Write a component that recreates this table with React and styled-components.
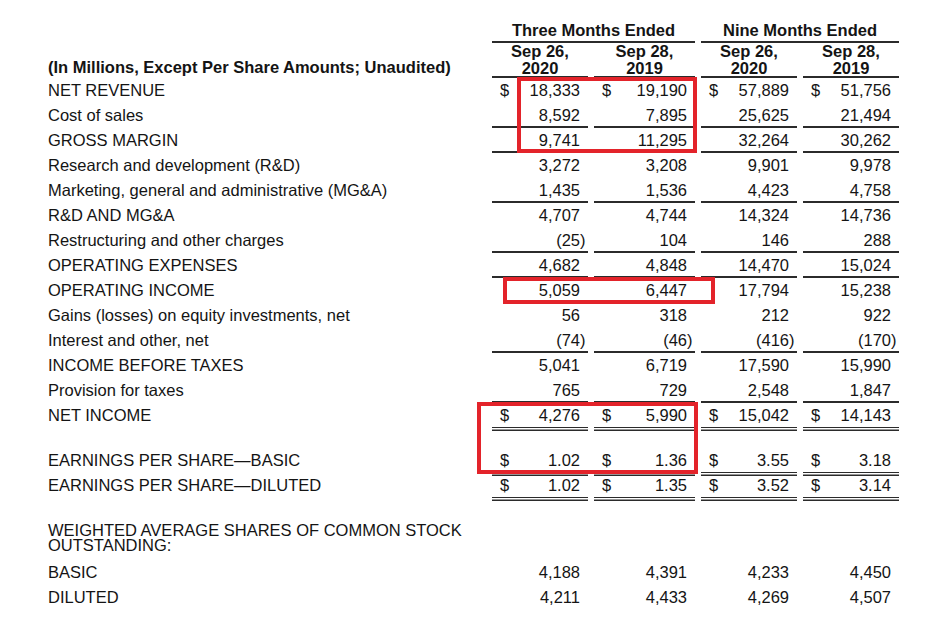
import React from 'react';
import styled, { createGlobalStyle } from 'styled-components';

const GlobalStyle = createGlobalStyle`
  html, body {
    margin: 0;
    padding: 0;
    background: #fff;
  }
  body {
    font-family: "Liberation Sans", Arial, sans-serif;
    color: #141414;
  }
`;

const COLS = '438px 96px 101px 96px 96px';
const INK = '#2b2b2b';

const Page = styled.div`
  position: relative;
  width: 944px;
  height: 617px;
  overflow: hidden;
  box-sizing: border-box;
  padding: 21px 0 0 48px;
  font-size: 16.5px;
`;

const Grid = styled.div`
  display: grid;
  grid-template-columns: ${COLS};
  column-gap: 6px;
`;

const rule = (kind) => {
  if (kind === 'single') {
    return `background: linear-gradient(${INK}, ${INK}) left bottom / 100% 2px no-repeat;`;
  }
  if (kind === 'double') {
    return `
      background: linear-gradient(${INK}, ${INK}) left bottom / 100% 1.5px no-repeat;
      box-shadow: 0 1.5px 0 #fff, 0 3px 0 ${INK};
    `;
  }
  return '';
};

const GroupHead = styled.div`
  grid-column: span 2;
  text-align: center;
  font-weight: 700;
  line-height: 18px;
  padding-bottom: 4px;
  ${rule('single')}
`;

const DateHead = styled.div`
  text-align: center;
  font-weight: 700;
  line-height: 17px;
  padding-top: 0;
  padding-bottom: 1px;
  ${rule('single')}
`;

const UnitsLabel = styled.div`
  align-self: end;
  font-weight: 700;
  line-height: 18px;
  padding-bottom: 2px;
  white-space: nowrap;
`;

const Row = styled(Grid)`
  height: 25px;
  margin-top: ${(p) => p.$gap || 0}px;
`;

const Label = styled.div`
  line-height: 25px;
  white-space: nowrap;
`;

const Value = styled.div`
  display: flex;
  justify-content: space-between;
  align-items: center;
  padding: 0 8px;
  white-space: nowrap;
  ${(p) => rule(p.$rule)}
`;

const Paren = styled.span`
  margin-right: -5.5px;
`;

const NoteLabel = styled.div`
  grid-column: 1;
  line-height: 15px;
  margin: 25px 0 7px;
`;

const Highlight = styled.div`
  position: absolute;
  box-sizing: border-box;
  border: 4px solid #e3232a;
  pointer-events: none;
`;

const rows = [
  { label: 'NET REVENUE', values: ['18,333', '19,190', '57,889', '51,756'], dollar: true },
  { label: 'Cost of sales', values: ['8,592', '7,895', '25,625', '21,494'], rule: 'single' },
  { label: 'GROSS MARGIN', values: ['9,741', '11,295', '32,264', '30,262'], rule: 'single' },
  { label: 'Research and development (R&D)', values: ['3,272', '3,208', '9,901', '9,978'] },
  { label: 'Marketing, general and administrative (MG&A)', values: ['1,435', '1,536', '4,423', '4,758'], rule: 'single' },
  { label: 'R&D AND MG&A', values: ['4,707', '4,744', '14,324', '14,736'] },
  { label: 'Restructuring and other charges', values: ['(25)', '104', '146', '288'], rule: 'single' },
  { label: 'OPERATING EXPENSES', values: ['4,682', '4,848', '14,470', '15,024'], rule: 'single' },
  { label: 'OPERATING INCOME', values: ['5,059', '6,447', '17,794', '15,238'] },
  { label: 'Gains (losses) on equity investments, net', values: ['56', '318', '212', '922'] },
  { label: 'Interest and other, net', values: ['(74)', '(46)', '(416)', '(170)'], rule: 'single' },
  { label: 'INCOME BEFORE TAXES', values: ['5,041', '6,719', '17,590', '15,990'] },
  { label: 'Provision for taxes', values: ['765', '729', '2,548', '1,847'], rule: 'single' },
  { label: 'NET INCOME', values: ['4,276', '5,990', '15,042', '14,143'], dollar: true, rule: 'double' },
  { label: 'EARNINGS PER SHARE\u2014BASIC', values: ['1.02', '1.36', '3.55', '3.18'], dollar: true, rule: 'double', gap: 20 },
  { label: 'EARNINGS PER SHARE\u2014DILUTED', values: ['1.02', '1.35', '3.52', '3.14'], dollar: true, rule: 'double' },
];

const shares = [
  { label: 'BASIC', values: ['4,188', '4,391', '4,233', '4,450'] },
  { label: 'DILUTED', values: ['4,211', '4,433', '4,269', '4,507'] },
];

const Amount = ({ text }) =>
  text.endsWith(')') ? (
    <span>
      {text.slice(0, -1)}
      <Paren>)</Paren>
    </span>
  ) : (
    <span>{text}</span>
  );

const DataRow = ({ row }) => (
  <Row $gap={row.gap}>
    <Label>{row.label}</Label>
    {row.values.map((v, i) => (
      <Value key={i} $rule={row.rule}>
        <span>{row.dollar ? '$' : ''}</span>
        <Amount text={v} />
      </Value>
    ))}
  </Row>
);

const boxes = [
  { left: 517, top: 77, width: 180, height: 76 },
  { left: 503, top: 277, width: 212, height: 27 },
  { left: 477, top: 402, width: 221, height: 72 },
];

export default function App() {
  return (
    <>
      <GlobalStyle />
      <Page>
        <Grid>
          <div />
          <GroupHead>Three Months Ended</GroupHead>
          <GroupHead>Nine Months Ended</GroupHead>
          <UnitsLabel>(In Millions, Except Per Share Amounts; Unaudited)</UnitsLabel>
          <DateHead>Sep 26,<br />2020</DateHead>
          <DateHead>Sep 28,<br />2019</DateHead>
          <DateHead>Sep 26,<br />2020</DateHead>
          <DateHead>Sep 28,<br />2019</DateHead>
        </Grid>

        {rows.map((r) => (
          <DataRow key={r.label} row={r} />
        ))}

        <Grid>
          <NoteLabel>WEIGHTED AVERAGE SHARES OF COMMON STOCK OUTSTANDING:</NoteLabel>
        </Grid>
        {shares.map((r) => (
          <DataRow key={r.label} row={r} />
        ))}

        {boxes.map((b, i) => (
          <Highlight key={i} style={b} />
        ))}
      </Page>
    </>
  );
}
